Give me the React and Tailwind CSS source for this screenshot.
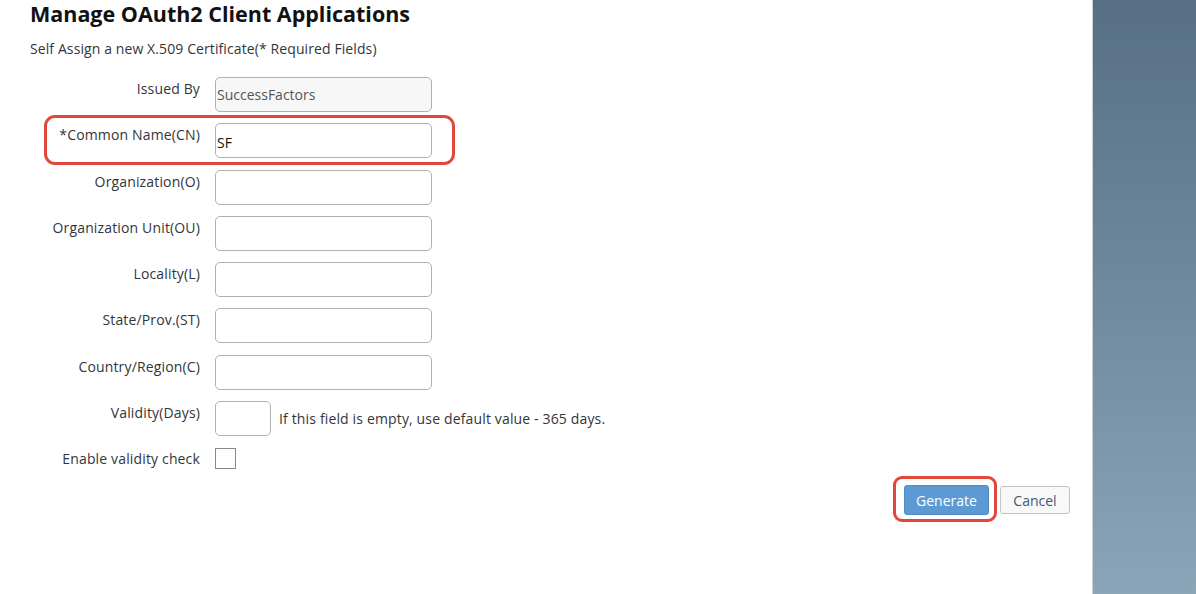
import React from 'react';

const FIELDS = [
  { label: 'Issued By', value: 'SuccessFactors', readOnly: true },
  { label: '*Common Name(CN)', value: 'SF', highlight: true },
  { label: 'Organization(O)', value: '' },
  { label: 'Organization Unit(OU)', value: '' },
  { label: 'Locality(L)', value: '' },
  { label: 'State/Prov.(ST)', value: '' },
  { label: 'Country/Region(C)', value: '' },
];

function Row({ label, children, highlight }) {
  return (
    <div className="relative flex items-start">
      {highlight && (
        <div className="absolute left-[14px] top-[-8px] w-[411px] h-[50px] border-[3px] border-[#e2483a] rounded-[11px] pointer-events-none" />
      )}
      <div className="w-[170px] pt-[2px] text-right text-[14px] text-[#32363a] leading-[20px] tracking-[0.15px]">
        {label}
      </div>
      <div className="ml-[15px] flex items-center">{children}</div>
    </div>
  );
}

export default function App() {
  return (
    <div className="flex w-[1196px] h-[594px] bg-white font-['Open_Sans',Arial,sans-serif] overflow-hidden">
      {/* Main */}
      <div className="flex-1 pl-[30px] pr-[22px] pt-[1px]">
        <h1 className="text-[21.5px] leading-[25px] font-bold text-[#111]">
          Manage OAuth2 Client Applications
        </h1>
        <p className="mt-[14px] text-[14px] leading-[18px] text-[#32363a] tracking-[0.1px]">
          Self Assign a new X.509 Certificate(* Required Fields)
        </p>

        <div className="mt-[19px] flex flex-col gap-[11.3px]">
          {FIELDS.map(f => (
            <Row key={f.label} label={f.label} highlight={f.highlight}>
              <input
                readOnly
                value={f.value}
                className={`w-[217px] h-[35px] rounded-[5px] border border-[#b0b0b0] px-[1px] text-[14px] outline-none ${
                  f.readOnly ? 'bg-[#f7f7f7] text-[#555]' : 'bg-white text-[#111]'
                } ${f.highlight ? 'pt-[4px]' : ''}`}
              />
            </Row>
          ))}
          <Row label="Validity(Days)">
            <input
              readOnly
              value=""
              className="w-[56px] h-[35px] rounded-[5px] border border-[#b0b0b0] bg-white outline-none"
            />
            <span className="ml-[8px] text-[14px] text-[#32363a] tracking-[0.15px]">
              If this field is empty, use default value - 365 days.
            </span>
          </Row>
        </div>

        <div className="mt-[12px] flex items-center">
          <div className="w-[170px] text-right text-[14px] text-[#32363a] leading-[20px] tracking-[0.15px]">
            Enable validity check
          </div>
          <div className="ml-[15px] w-[21px] h-[21px] border border-[#8a8a8a] bg-white" />
        </div>

        <div className="mt-[16px] flex justify-end items-center">
          <div className="relative">
            <div className="absolute left-[-11px] top-[-9px] w-[104px] h-[46px] border-[3px] border-[#e2483a] rounded-[9px] pointer-events-none" />
            <button className="w-[85px] h-[30px] rounded-[3px] bg-[#5c9ad4] border border-[#4f8ac2] text-white text-[14px]">
              Generate
            </button>
          </div>
          <button className="ml-[11px] w-[70px] h-[28px] rounded-[3px] bg-[#f8f8f8] border border-[#c4c4c4] text-[#3e5a77] text-[14px]">
            Cancel
          </button>
        </div>
      </div>

      {/* Side panel */}
      <div className="w-[104px] h-full border-l border-[#c8d2da] bg-gradient-to-b from-[#566f85] to-[#8aa4b8]" />
    </div>
  );
}
